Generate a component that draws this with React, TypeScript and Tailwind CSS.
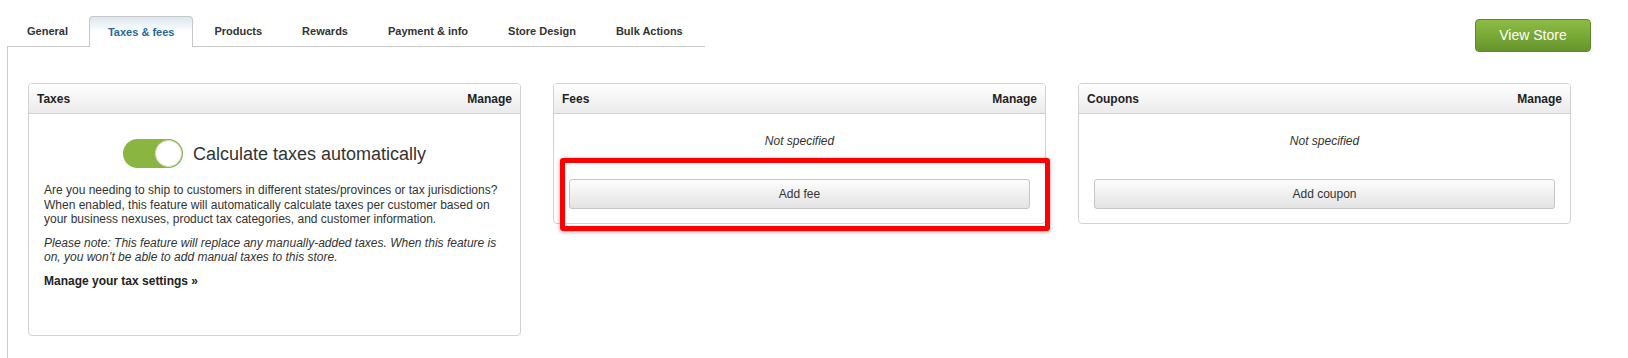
export default function App() {
  const tabs = [
    "General",
    "Taxes & fees",
    "Products",
    "Rewards",
    "Payment & info",
    "Store Design",
    "Bulk Actions",
  ];
  return (
    <div className="h-[358px] w-[1628px] overflow-hidden bg-white pt-[16px] font-['Liberation_Sans','Arial',sans-serif] text-[#333]">
      <div className="flex h-[31px] items-start justify-between">
        <ul className="ml-[7px] flex h-[31px] w-[698px] items-start gap-[2px] border-b border-[#cccccc] pl-[1px]">
          {tabs.map((t) =>
            t === "Taxes & fees" ? (
              <li
                key={t}
                className="flex h-[31px] items-center rounded-t-[4px] border border-b-0 border-[#c8c8c8] bg-gradient-to-b from-[#dce7ee] via-white to-white px-[18px] pt-[1px] text-[11px] font-bold text-[#23689e]"
              >
                {t}
              </li>
            ) : (
              <li
                key={t}
                className="flex h-[30px] items-center px-[19px] text-[11px] font-bold text-[#333]"
              >
                {t}
              </li>
            )
          )}
        </ul>
        <button className="mr-[37px] mt-[3px] h-[33px] w-[116px] shrink-0 rounded-[4px] border border-[#5e8a25] bg-gradient-to-b from-[#8dbc45] to-[#65952a] text-[14px] text-white">
          View Store
        </button>
      </div>

      <div className="ml-[7px] h-[311px] border-l border-[#cccccc] pl-[20px] pt-[36px]">
        <div className="flex items-start gap-[32px]">
          {/* Taxes */}
          <div className="w-[493px] rounded-[4px] border border-[#d2d2d2]">
            <div className="flex h-[30px] items-center justify-between rounded-t-[3px] border-b border-[#cfcfcf] bg-gradient-to-b from-white to-[#ebebeb] px-[8px] text-[12px] font-bold text-[#1f1f1f]">
              <span>Taxes</span>
              <span>Manage</span>
            </div>
            <div className="h-[221px] px-[15px] pt-[25px]">
              <div className="flex h-[29px] items-center justify-center gap-[10px]">
                <div className="relative h-[29px] w-[60px] rounded-full bg-[#8ab541]">
                  <div className="absolute right-[1px] top-[1px] h-[27px] w-[27px] rounded-full border border-[#dcdcdc] bg-white" />
                </div>
                <span className="text-[18px] leading-[24px] text-[#333]">
                  Calculate taxes automatically
                </span>
              </div>
              <p className="mb-[9px] mt-[15px] text-[12px] leading-[14.5px] text-[#333]">
                <span className="block whitespace-nowrap">
                  Are you needing to ship to customers in different states/provinces or tax jurisdictions?
                </span>
                <span className="block whitespace-nowrap">
                  When enabled, this feature will automatically calculate taxes per customer based on
                </span>
                <span className="block whitespace-nowrap">
                  your business nexuses, product tax categories, and customer information.
                </span>
              </p>
              <p className="mb-[9px] text-[12px] italic leading-[14.5px] text-[#333]">
                <span className="block whitespace-nowrap">
                  Please note: This feature will replace any manually-added taxes. When this feature is
                </span>
                <span className="block whitespace-nowrap">
                  on, you won’t be able to add manual taxes to this store.
                </span>
              </p>
              <p className="text-[12px] font-bold leading-[14.5px] text-[#222]">
                Manage your tax settings »
              </p>
            </div>
          </div>

          {/* Fees */}
          <div className="relative w-[493px] rounded-[4px] border border-[#d2d2d2]">
            <div className="flex h-[30px] items-center justify-between rounded-t-[3px] border-b border-[#cfcfcf] bg-gradient-to-b from-white to-[#ebebeb] px-[8px] text-[12px] font-bold text-[#1f1f1f]">
              <span>Fees</span>
              <span>Manage</span>
            </div>
            <div className="px-[15px] pb-[14px] pt-[20px] text-center">
              <p className="text-[12px] italic leading-[15px] text-[#333]">Not specified</p>
              <button className="mt-[30px] h-[30px] w-full rounded-[3px] border border-[#c6c6c6] bg-gradient-to-b from-[#fdfdfd] to-[#e3e3e3] text-[12px] text-[#333]">
                Add fee
              </button>
            </div>
            <div className="pointer-events-none absolute left-[6px] top-[74px] h-[73px] w-[490px] rounded-[3px] border-[5px] border-[#ff0000] shadow-[0_1px_4px_rgba(0,0,0,0.35)]" />
          </div>

          {/* Coupons */}
          <div className="w-[493px] rounded-[4px] border border-[#d2d2d2]">
            <div className="flex h-[30px] items-center justify-between rounded-t-[3px] border-b border-[#cfcfcf] bg-gradient-to-b from-white to-[#ebebeb] px-[8px] text-[12px] font-bold text-[#1f1f1f]">
              <span>Coupons</span>
              <span>Manage</span>
            </div>
            <div className="px-[15px] pb-[14px] pt-[20px] text-center">
              <p className="text-[12px] italic leading-[15px] text-[#333]">Not specified</p>
              <button className="mt-[30px] h-[30px] w-full rounded-[3px] border border-[#c6c6c6] bg-gradient-to-b from-[#fdfdfd] to-[#e3e3e3] text-[12px] text-[#333]">
                Add coupon
              </button>
            </div>
          </div>
        </div>
      </div>
    </div>
  );
}
